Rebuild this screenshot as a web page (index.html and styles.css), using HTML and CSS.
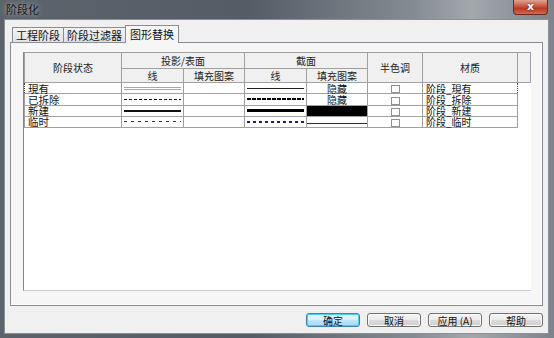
FILE: index.html
```html
<!DOCTYPE html>
<html lang="zh-CN">
<head>
    <meta charset="UTF-8">
    <title>阶段化</title>
    <link rel="stylesheet" href="styles.css">
</head>
<body>
    <div class="window">
        <div class="titlebar">
            <span class="title">阶段化</span>
            <span class="close">x</span>
        </div>

        <div class="client">
            <div class="tabs">
                <div class="tab">工程阶段</div>
                <div class="tab">阶段过滤器</div>
                <div class="tab active">图形替换</div>
            </div>

            <div class="panel">
                <div class="grid">
                    <table>
                        <colgroup>
                            <col style="width: 97px">
                            <col style="width: 62px">
                            <col style="width: 61px">
                            <col style="width: 62px">
                            <col style="width: 61px">
                            <col style="width: 55px">
                            <col style="width: 95px">
                            <col>
                        </colgroup>
                        <thead>
                            <tr class="head-top">
                                <th rowspan="2">阶段状态</th>
                                <th colspan="2">投影/表面</th>
                                <th colspan="2">截面</th>
                                <th rowspan="2">半色调</th>
                                <th rowspan="2">材质</th>
                                <th rowspan="2" class="filler"></th>
                            </tr>
                            <tr class="head-sub">
                                <th>线</th>
                                <th>填充图案</th>
                                <th>线</th>
                                <th>填充图案</th>
                            </tr>
                        </thead>
                        <tbody>
                            <tr class="current">
                                <td class="name">現有</td>
                                <td><div class="line proj-existing"></div></td>
                                <td></td>
                                <td><div class="line cut-existing"></div></td>
                                <td class="hidden">隐藏</td>
                                <td class="check"><span class="box"></span></td>
                                <td class="material">阶段_現有</td>
                                <td class="filler"></td>
                            </tr>
                            <tr>
                                <td class="name">已拆除</td>
                                <td><div class="line proj-demolished"></div></td>
                                <td></td>
                                <td><div class="line cut-demolished"></div></td>
                                <td class="hidden">隐藏</td>
                                <td class="check"><span class="box"></span></td>
                                <td class="material">阶段_拆除</td>
                                <td class="filler"></td>
                            </tr>
                            <tr>
                                <td class="name">新建</td>
                                <td><div class="line proj-new"></div></td>
                                <td></td>
                                <td><div class="line cut-new"></div></td>
                                <td class="solid-fill"></td>
                                <td class="check"><span class="box"></span></td>
                                <td class="material">阶段_新建</td>
                                <td class="filler"></td>
                            </tr>
                            <tr>
                                <td class="name">临时</td>
                                <td><div class="line proj-temp"></div></td>
                                <td></td>
                                <td><div class="line cut-temp"></div></td>
                                <td><div class="fill-line"></div></td>
                                <td class="check"><span class="box"></span></td>
                                <td class="material">阶段_临时</td>
                                <td class="filler"></td>
                            </tr>
                        </tbody>
                    </table>
                </div>
            </div>

            <div class="buttons">
                <button class="default">确定</button>
                <button>取消</button>
                <button>应用 (A)</button>
                <button>帮助</button>
            </div>
        </div>
    </div>
</body>
</html>
```

FILE: styles.css
```css
* {
    margin: 0;
    padding: 0;
    box-sizing: border-box;
}
body {
    font-family: "Noto Sans CJK SC", "Noto Sans", sans-serif;
    background: #5d646c;
    color: #111;
    width: 554px;
    height: 338px;
    overflow: hidden;
}
.window {
    height: 338px;
    display: flex;
    flex-direction: column;
    padding: 0 5px 4px 4px;
    background: linear-gradient(to right, #5c636b 0%, #545c66 45%, #868c93 75%, #a3a8ad 85%, #7d838a 100%);
}
.titlebar {
    height: 19px;
    display: flex;
    justify-content: space-between;
    align-items: flex-start;
}
.title {
    font-size: 11px;
    line-height: 19px;
    padding-left: 2px;
    color: #161616;
    text-shadow: 0 0 5px rgba(255, 255, 255, 0.7);
}
.close {
    width: 35px;
    height: 15px;
    margin-right: 1px;
    border: 1px solid #6b2a22;
    border-top: none;
    border-radius: 0 0 4px 4px;
    background: linear-gradient(#e0a493 0%, #c9563f 45%, #b63a22 60%, #cf6b50 100%);
    color: #fff;
    font-family: "DejaVu Sans", sans-serif;
    font-size: 11px;
    font-weight: bold;
    line-height: 13px;
    text-align: center;
    text-shadow: 0 0 2px #5a1208;
}
.client {
    flex: 1;
    display: flex;
    flex-direction: column;
    background: #f0f0f0;
    border: 1px solid #8a9098;
    padding: 7px 5px 6px 5px;
}
.tabs {
    display: flex;
    align-items: flex-end;
    height: 15px;
    margin-left: 2px;
    position: relative;
    z-index: 2;
}
.tab {
    height: 15px;
    padding: 0 3px;
    font-size: 11px;
    line-height: 14px;
    border: 1px solid #898c95;
    border-bottom: none;
    margin-right: -1px;
    background: linear-gradient(#f3f3f3, #e2e2e2);
    color: #111;
}
.tab.active {
    height: 18px;
    margin-bottom: -1px;
    padding: 0 4px;
    line-height: 16px;
    background: #f6f6f6;
}
.panel {
    flex: 1;
    display: flex;
    border: 1px solid #898c95;
    background: #f6f6f6;
    box-shadow: inset -1px -1px 0 #fff;
    padding: 9px 11px 14px 12px;
}
.grid {
    flex: 1;
    background: #fff;
    border-left: 1px solid #828790;
    border-bottom: 1px solid #c9ccd1;
}
table {
    width: 100%;
    table-layout: fixed;
    border-collapse: collapse;
}
th {
    background: #f0f0f0;
    border: 1px solid #a0a0a0;
    font-size: 10px;
    font-weight: normal;
    color: #222;
    padding: 0;
    line-height: 12px;
}
.head-top th {
    height: 16px;
}
.head-sub th {
    height: 14px;
}
th.filler {
    border-right: 1px solid #a0a0a0;
}
td {
    height: 10px;
    border: 1px solid #a0a0a0;
    padding: 0;
    font-size: 10px;
    line-height: 9px;
    white-space: nowrap;
    vertical-align: middle;
}
td.filler {
    border: none;
}
.current td {
    border-top: 1px dotted #444;
    border-bottom: 1px dotted #444;
}
.current td.name {
    border-left: 1px dotted #444;
}
.current td.material {
    border-right: 1px dotted #444;
}
.current td.filler {
    border: none;
}
.name {
    padding-left: 3px;
    font-size: 10.5px;
}
.material {
    padding-left: 3px;
}
.hidden {
    text-align: center;
}
.check {
    text-align: center;
}
.box {
    display: inline-block;
    width: 9px;
    height: 8px;
    border: 1px solid #8e8f8f;
    background: #fff;
    vertical-align: middle;
}
.solid-fill {
    background: #000;
}
.line {
    margin: 0 2px;
}
.proj-existing {
    height: 3px;
    border-top: 1px solid #a8a8a8;
    border-bottom: 1px solid #a8a8a8;
}
.proj-demolished {
    height: 1px;
    background: repeating-linear-gradient(to right, #111 0 3px, transparent 3px 5px);
}
.proj-new {
    height: 2px;
    background: #111;
}
.proj-temp {
    height: 1px;
    background: repeating-linear-gradient(to right, #2a2a8a 0 3px, transparent 3px 7px);
}
.cut-existing {
    height: 1px;
    background: #222;
}
.cut-demolished {
    height: 2px;
    background: repeating-linear-gradient(to right, #000 0 4px, transparent 4px 5px);
}
.cut-new {
    height: 3px;
    background: #000;
}
.cut-temp {
    height: 2px;
    background: repeating-linear-gradient(to right, #1e1e80 0 3px, transparent 3px 6px);
}
.fill-line {
    height: 1px;
    margin-top: 3px;
    background: #24246e;
}
.buttons {
    display: flex;
    justify-content: flex-end;
    gap: 7px;
    margin-top: 7px;
}
button {
    width: 54px;
    height: 14px;
    font-family: "Noto Sans CJK SC", "Noto Sans", sans-serif;
    font-size: 10px;
    line-height: 11px;
    color: #111;
    border: 1px solid #707070;
    border-radius: 3px;
    background: linear-gradient(#f4f4f4 0%, #ebebeb 50%, #dcdcdc 51%, #cfcfcf 100%);
    box-shadow: inset 0 0 0 1px #fbfbfb;
}
button.default {
    border-color: #3c7fb1;
    background: linear-gradient(#eaf6fd 0%, #d9f0fc 50%, #bee6fd 51%, #a7d9f5 100%);
    box-shadow: inset 0 0 0 1px #48d4f6;
}
```
